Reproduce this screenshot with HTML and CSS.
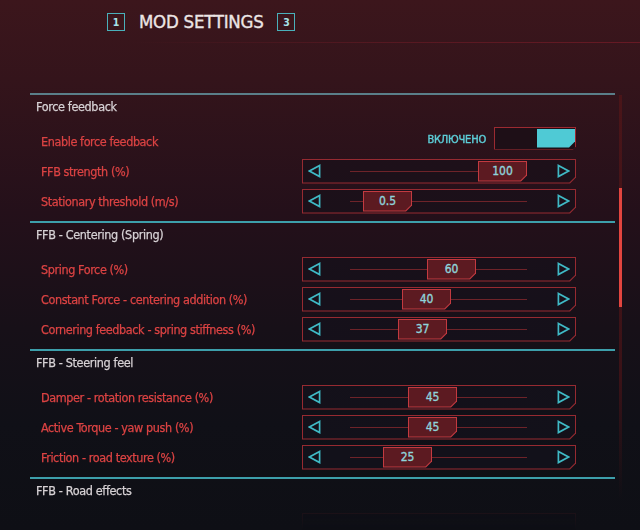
FILE: index.html
```html
<!DOCTYPE html>
<html lang="ru">
<head>
<meta charset="utf-8">
<title>Mod Settings</title>
<link rel="stylesheet" href="styles.css">
</head>
<body>
<div class="screen">
  <header class="top">
    <div class="title-row">
      <span class="key">1</span>
      <h1 class="title">MOD SETTINGS</h1>
      <span class="key">3</span>
    </div>
    <div class="glow"></div>
  </header>

  <div class="body">
    <main class="list">
      <section class="group group-first">
        <div class="group-head">Force feedback</div>
        <div class="row">
          <span class="label">Enable force feedback</span>
          <span class="state">ВКЛЮЧЕНО</span>
          <div class="toggle"><div class="toggle-in"><div class="toggle-on"></div></div></div>
        </div>
        <div class="row">
          <span class="label">FFB strength (%)</span>
          <div class="slider"><div class="slider-in">
            <span class="arr arr-l"><svg width="13" height="14" viewBox="0 0 13 14"><path d="M11.6 1.4 L1.4 7 L11.6 12.6 Z"/></svg></span>
            <div class="track"><div class="thumb" style="margin-left:128px"><div class="thumb-in">100</div></div></div>
            <span class="arr arr-r"><svg width="13" height="14" viewBox="0 0 13 14"><path d="M1.4 1.4 L11.6 7 L1.4 12.6 Z"/></svg></span>
          </div></div>
        </div>
        <div class="row">
          <span class="label">Stationary threshold (m/s)</span>
          <div class="slider"><div class="slider-in">
            <span class="arr arr-l"><svg width="13" height="14" viewBox="0 0 13 14"><path d="M11.6 1.4 L1.4 7 L11.6 12.6 Z"/></svg></span>
            <div class="track"><div class="thumb" style="margin-left:13px"><div class="thumb-in">0.5</div></div></div>
            <span class="arr arr-r"><svg width="13" height="14" viewBox="0 0 13 14"><path d="M1.4 1.4 L11.6 7 L1.4 12.6 Z"/></svg></span>
          </div></div>
        </div>
      </section>

      <section class="group">
        <div class="group-head">FFB - Centering (Spring)</div>
        <div class="row">
          <span class="label">Spring Force (%)</span>
          <div class="slider"><div class="slider-in">
            <span class="arr arr-l"><svg width="13" height="14" viewBox="0 0 13 14"><path d="M11.6 1.4 L1.4 7 L11.6 12.6 Z"/></svg></span>
            <div class="track"><div class="thumb" style="margin-left:77px"><div class="thumb-in">60</div></div></div>
            <span class="arr arr-r"><svg width="13" height="14" viewBox="0 0 13 14"><path d="M1.4 1.4 L11.6 7 L1.4 12.6 Z"/></svg></span>
          </div></div>
        </div>
        <div class="row">
          <span class="label">Constant Force - centering addition (%)</span>
          <div class="slider"><div class="slider-in">
            <span class="arr arr-l"><svg width="13" height="14" viewBox="0 0 13 14"><path d="M11.6 1.4 L1.4 7 L11.6 12.6 Z"/></svg></span>
            <div class="track"><div class="thumb" style="margin-left:52px"><div class="thumb-in">40</div></div></div>
            <span class="arr arr-r"><svg width="13" height="14" viewBox="0 0 13 14"><path d="M1.4 1.4 L11.6 7 L1.4 12.6 Z"/></svg></span>
          </div></div>
        </div>
        <div class="row">
          <span class="label">Cornering feedback - spring stiffness (%)</span>
          <div class="slider"><div class="slider-in">
            <span class="arr arr-l"><svg width="13" height="14" viewBox="0 0 13 14"><path d="M11.6 1.4 L1.4 7 L11.6 12.6 Z"/></svg></span>
            <div class="track"><div class="thumb" style="margin-left:48px"><div class="thumb-in">37</div></div></div>
            <span class="arr arr-r"><svg width="13" height="14" viewBox="0 0 13 14"><path d="M1.4 1.4 L11.6 7 L1.4 12.6 Z"/></svg></span>
          </div></div>
        </div>
      </section>

      <section class="group">
        <div class="group-head">FFB - Steering feel</div>
        <div class="row">
          <span class="label">Damper - rotation resistance (%)</span>
          <div class="slider"><div class="slider-in">
            <span class="arr arr-l"><svg width="13" height="14" viewBox="0 0 13 14"><path d="M11.6 1.4 L1.4 7 L11.6 12.6 Z"/></svg></span>
            <div class="track"><div class="thumb" style="margin-left:58px"><div class="thumb-in">45</div></div></div>
            <span class="arr arr-r"><svg width="13" height="14" viewBox="0 0 13 14"><path d="M1.4 1.4 L11.6 7 L1.4 12.6 Z"/></svg></span>
          </div></div>
        </div>
        <div class="row">
          <span class="label">Active Torque - yaw push (%)</span>
          <div class="slider"><div class="slider-in">
            <span class="arr arr-l"><svg width="13" height="14" viewBox="0 0 13 14"><path d="M11.6 1.4 L1.4 7 L11.6 12.6 Z"/></svg></span>
            <div class="track"><div class="thumb" style="margin-left:58px"><div class="thumb-in">45</div></div></div>
            <span class="arr arr-r"><svg width="13" height="14" viewBox="0 0 13 14"><path d="M1.4 1.4 L11.6 7 L1.4 12.6 Z"/></svg></span>
          </div></div>
        </div>
        <div class="row">
          <span class="label">Friction - road texture (%)</span>
          <div class="slider"><div class="slider-in">
            <span class="arr arr-l"><svg width="13" height="14" viewBox="0 0 13 14"><path d="M11.6 1.4 L1.4 7 L11.6 12.6 Z"/></svg></span>
            <div class="track"><div class="thumb" style="margin-left:33px"><div class="thumb-in">25</div></div></div>
            <span class="arr arr-r"><svg width="13" height="14" viewBox="0 0 13 14"><path d="M1.4 1.4 L11.6 7 L1.4 12.6 Z"/></svg></span>
          </div></div>
        </div>
      </section>

      <section class="group">
        <div class="group-head">FFB - Road effects</div>
        <div class="row row-faded">
          <span class="label"></span>
          <div class="slider"><div class="slider-in"></div></div>
        </div>
      </section>
    </main>

    <aside class="scroll"><div class="scroll-thumb"></div></aside>
  </div>
</div>
</body>
</html>
```

FILE: styles.css
```css
* {
  box-sizing: border-box;
  margin: 0;
  padding: 0;
}

html, body {
  width: 640px;
  height: 530px;
  overflow: hidden;
}

body {
  background: linear-gradient(180deg, #3c161c 0%, #34141b 15%, #24101a 40%, #171018 62%, #101017 80%, #0e0f15 100%);
  font-family: "Liberation Sans Narrow", "DejaVu Sans Condensed", "Liberation Sans", sans-serif;
}

.screen {
  width: 640px;
  height: 530px;
}

/* ---------- header ---------- */
.top {
  height: 93px;
  padding-top: 13px;
}

.title-row {
  display: flex;
  align-items: center;
  gap: 14px;
  height: 18px;
  padding-left: 107px;
}

.key {
  width: 18px;
  height: 18px;
  border: 1.5px solid #4ab0ba;
  color: #a6e2e8;
  font-size: 10.5px;
  font-weight: bold;
  display: flex;
  align-items: center;
  justify-content: center;
}

.title {
  font-size: 18.5px;
  font-weight: normal;
  line-height: 18px;
  color: #ece5e5;
  letter-spacing: -0.25px;
  -webkit-text-stroke: 0.35px #ece5e5;
}

.glow {
  height: 1px;
  margin: 11px 0 0 130px;
  background: linear-gradient(90deg, rgba(110, 30, 40, 0), rgba(130, 30, 42, 0.4) 50%, rgba(150, 30, 45, 0.5));
}

/* ---------- body ---------- */
.body {
  display: flex;
  height: 437px;
  overflow: hidden;
}

.list {
  width: 585px;
  height: 437px;
  margin-left: 30px;
  -webkit-mask-image: linear-gradient(180deg, #000 0, #000 408px, rgba(0, 0, 0, 0.3) 420px, rgba(0, 0, 0, 0) 437px);
  mask-image: linear-gradient(180deg, #000 0, #000 408px, rgba(0, 0, 0, 0.3) 420px, rgba(0, 0, 0, 0) 437px);
}

.scroll {
  width: 3px;
  height: 405px;
  margin: 2px 0 0 4px;
  padding-top: 93px;
  background: linear-gradient(180deg, #4a1519, #3a1217 70%, rgba(58, 18, 23, 0));
}

.scroll-thumb {
  height: 119px;
  background: #e2453f;
}

/* ---------- groups ---------- */
.group {
  border-top: 2px solid #3d9fab;
  padding-bottom: 7px;
}

.group-first {
  border-top-color: #5a7e89;
}

.group-head {
  height: 24px;
  line-height: 24px;
  padding-left: 6px;
  margin-bottom: 9px;
  font-size: 12.5px;
  letter-spacing: -0.35px;
  color: #d7d2d5;
  -webkit-text-stroke: 0.25px #d7d2d5;
}

.row {
  display: flex;
  align-items: center;
  height: 26px;
  margin-bottom: 4px;
  padding: 0 39px 0 11px;
}

.row:last-child {
  margin-bottom: 0;
}

.label {
  flex: 1;
  font-size: 12.5px;
  letter-spacing: -0.4px;
  color: #dc4343;
  -webkit-text-stroke: 0.25px #dc4343;
}

.state {
  margin-right: 8px;
  margin-bottom: 3px;
  font-size: 11px;
  letter-spacing: -0.2px;
  color: #5ccdd7;
  -webkit-text-stroke: 0.4px #5ccdd7;
}

/* ---------- toggle ---------- */
.toggle {
  width: 82px;
  height: 23px;
  margin-bottom: 6px;
  padding: 1px;
  background: #9c2a31;
  clip-path: polygon(0 0, 100% 0, 100% calc(100% - 3px), calc(100% - 3px) 100%, 0 100%);
}

.toggle-in {
  height: 100%;
  display: flex;
  justify-content: flex-end;
  padding: 1px 0;
  background: #1e0f17;
}

.toggle-on {
  width: 38px;
  height: 100%;
  background: #4fcad5;
  clip-path: polygon(0 0, 100% 0, 100% calc(100% - 6px), calc(100% - 6px) 100%, 0 100%);
}

/* ---------- slider ---------- */
.slider {
  width: 274px;
  height: 25px;
  padding: 1px;
  background: #962a31;
  clip-path: polygon(0 0, 100% 0, 100% calc(100% - 6px), calc(100% - 6px) 100%, 0 100%);
}

.slider-in {
  height: 100%;
  display: flex;
  align-items: center;
  background: linear-gradient(180deg, #24111a 0, #1e1019 150px, #16101a 300px, #12111a 450px) fixed;
  clip-path: polygon(0 0, 100% 0, 100% calc(100% - 5.6px), calc(100% - 5.6px) 100%, 0 100%);
}

.arr {
  display: flex;
}

.arr svg path {
  fill: none;
  stroke: #3fb9c5;
  stroke-width: 1.7;
  stroke-linejoin: miter;
}

.arr-l {
  width: 47px;
  padding-left: 5px;
}

.arr-r {
  margin-left: auto;
  margin-right: 5px;
}

.track {
  position: relative;
  width: 177px;
  height: 21px;
  display: flex;
  align-items: center;
}

.track::before {
  content: "";
  position: absolute;
  left: 0;
  right: 0;
  top: 10px;
  height: 1px;
  background: #6e2329;
}

.thumb {
  position: relative;
  width: 49px;
  height: 21px;
  padding: 1px;
  background: #c33a40;
  clip-path: polygon(0 0, 100% 0, 100% calc(100% - 6px), calc(100% - 6px) 100%, 0 100%);
}

.thumb-in {
  height: 100%;
  display: flex;
  align-items: center;
  justify-content: center;
  background: #5c1a21;
  clip-path: polygon(0 0, 100% 0, 100% calc(100% - 5.6px), calc(100% - 5.6px) 100%, 0 100%);
  font-size: 12px;
  color: #8fd3da;
  -webkit-text-stroke: 0.35px #8fd3da;
}

.row-faded .slider {
  opacity: 0.35;
}
```
